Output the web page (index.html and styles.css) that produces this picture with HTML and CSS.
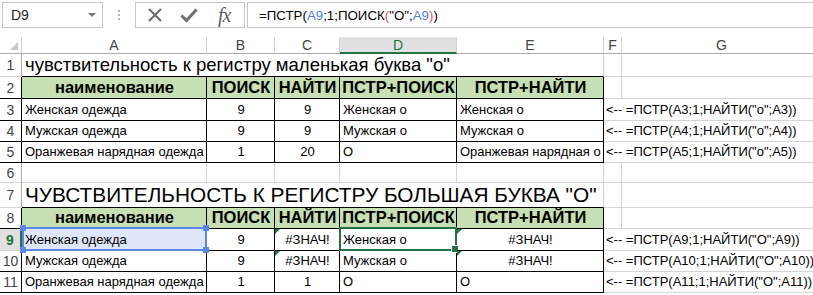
FILE: index.html
```html
<!DOCTYPE html>
<html lang="ru">
<head>
    <meta charset="UTF-8">
    <title>ПСТР и ПОИСК</title>
    <link rel="stylesheet" href="styles.css">
</head>
<body>
    <div class="toolbar">
        <div class="namebox"><span>D9</span><span class="caret"></span></div>
        <div class="grip"><i></i><i></i><i></i></div>
        <div class="buttons">
            <svg width="16" height="16" viewBox="0 0 16 16"><path d="M2 2 L14 14 M14 2 L2 14" stroke="#707070" stroke-width="2.2" fill="none"/></svg>
            <svg width="18" height="16" viewBox="0 0 18 16"><path d="M1.5 8.5 L6.5 13.5 L16.5 2.5" stroke="#707070" stroke-width="3" fill="none"/></svg>
            <span class="fx">fx</span>
        </div>
        <div class="formula">=ПСТР(<span class="ref">A9</span>;1;ПОИСК<span class="par">(</span>"О";<span class="ref">A9</span><span class="par">)</span>)</div>
    </div>

    <div class="sheet">
        <!-- column headers -->
        <div class="corner"><span></span></div>
        <div class="ch">A</div>
        <div class="ch">B</div>
        <div class="ch">C</div>
        <div class="ch on">D</div>
        <div class="ch">E</div>
        <div class="ch">F</div>
        <div class="ch">G</div>

        <!-- 1 -->
        <div class="rh">1</div>
        <div class="c t t1">чувствительность к регистру маленькая буква "о"</div>
        <div class="c"></div>
        <div class="c"></div>

        <!-- 2 -->
        <div class="rh k">2</div>
        <div class="c h">наименование</div>
        <div class="c h">ПОИСК</div>
        <div class="c h">НАЙТИ</div>
        <div class="c h">ПСТР+ПОИСК</div>
        <div class="c h">ПСТР+НАЙТИ</div>
        <div class="c"></div>
        <div class="c"></div>

        <!-- 3 -->
        <div class="rh k">3</div>
        <div class="c k">Женская одежда</div>
        <div class="c k n">9</div>
        <div class="c k n">9</div>
        <div class="c k">Женская о</div>
        <div class="c k">Женская о</div>
        <div class="c note">&lt;-- =ПСТР(A3;1;НАЙТИ("о";A3))</div>

        <!-- 4 -->
        <div class="rh k">4</div>
        <div class="c k">Мужская одежда</div>
        <div class="c k n">9</div>
        <div class="c k n">9</div>
        <div class="c k">Мужская о</div>
        <div class="c k">Мужская о</div>
        <div class="c note">&lt;-- =ПСТР(A4;1;НАЙТИ("о";A4))</div>

        <!-- 5 -->
        <div class="rh k">5</div>
        <div class="c k">Оранжевая нарядная одежда</div>
        <div class="c k n">1</div>
        <div class="c k n">20</div>
        <div class="c k">О</div>
        <div class="c k">Оранжевая нарядная о</div>
        <div class="c note">&lt;-- =ПСТР(A5;1;НАЙТИ("о";A5))</div>

        <!-- 6 -->
        <div class="rh">6</div>
        <div class="c"></div>
        <div class="c"></div>
        <div class="c"></div>
        <div class="c"></div>
        <div class="c"></div>
        <div class="c"></div>
        <div class="c"></div>

        <!-- 7 -->
        <div class="rh">7</div>
        <div class="c t t2">ЧУВСТВИТЕЛЬНОСТЬ К РЕГИСТРУ БОЛЬШАЯ БУКВА "О"</div>
        <div class="c"></div>
        <div class="c"></div>

        <!-- 8 -->
        <div class="rh k">8</div>
        <div class="c h">наименование</div>
        <div class="c h">ПОИСК</div>
        <div class="c h">НАЙТИ</div>
        <div class="c h">ПСТР+ПОИСК</div>
        <div class="c h">ПСТР+НАЙТИ</div>
        <div class="c"></div>
        <div class="c"></div>

        <!-- 9 -->
        <div class="rh on">9</div>
        <div class="c k picked">Женская одежда<span class="ref-box"><i class="tl"></i><i class="tr"></i><i class="bl"></i><i class="br"></i></span></div>
        <div class="c k n">9</div>
        <div class="c k n err">#ЗНАЧ!</div>
        <div class="c k active">Женская о<span class="cursor"></span></div>
        <div class="c k n err">#ЗНАЧ!</div>
        <div class="c note">&lt;-- =ПСТР(A9;1;НАЙТИ("О";A9))</div>

        <!-- 10 -->
        <div class="rh k">10</div>
        <div class="c k">Мужская одежда</div>
        <div class="c k n">9</div>
        <div class="c k n err">#ЗНАЧ!</div>
        <div class="c k">Мужская о</div>
        <div class="c k n err">#ЗНАЧ!</div>
        <div class="c note">&lt;-- =ПСТР(A10;1;НАЙТИ("О";A10))</div>

        <!-- 11 -->
        <div class="rh k">11</div>
        <div class="c k">Оранжевая нарядная одежда</div>
        <div class="c k n">1</div>
        <div class="c k n">1</div>
        <div class="c k">О</div>
        <div class="c k">О</div>
        <div class="c note">&lt;-- =ПСТР(A11;1;НАЙТИ("О";A11))</div>
    </div>
</body>
</html>
```

FILE: styles.css
```css
* {
    margin: 0;
    padding: 0;
    box-sizing: border-box;
}

body {
    font-family: "Liberation Sans", Arial, sans-serif;
    background: #fff;
    color: #000;
    width: 813px;
    height: 295px;
    overflow: hidden;
}

/* formula bar */
.toolbar {
    display: flex;
    height: 26px;
    margin-top: 2px;
    padding-left: 2px;
}

.namebox {
    width: 101px;
    border: 1px solid #c6c6c6;
    display: flex;
    align-items: center;
    justify-content: space-between;
    padding: 0 6px 0 8px;
    font-size: 14px;
    color: #222;
}

.caret {
    border-left: 4px solid transparent;
    border-right: 4px solid transparent;
    border-top: 4px solid #777;
}

.grip {
    width: 32px;
    display: flex;
    flex-direction: column;
    align-items: center;
    justify-content: center;
    gap: 2px;
}

.grip i {
    width: 2px;
    height: 2px;
    background: #b5b5b5;
}

.buttons {
    width: 110px;
    border: 1px solid #c6c6c6;
    display: flex;
    align-items: center;
    gap: 17px;
    padding-left: 11px;
}

.fx {
    font-family: "Liberation Serif", "Times New Roman", serif;
    font-style: italic;
    font-size: 20px;
    color: #606060;
    margin-left: 3px;
    letter-spacing: -1px;
}

.formula {
    flex: 1;
    margin-left: 2px;
    border: 1px solid #c6c6c6;
    border-right: none;
    padding-left: 11px;
    font-size: 13.3px;
    display: flex;
    align-items: center;
}

.ref {
    color: #4f7fdf;
}

.par {
    color: #e0506a;
}

/* sheet grid */
.sheet {
    display: grid;
    grid-template-columns: 22px 185px 68px 65px 117px 147px 18px 200px;
    grid-template-rows: 17px 23px 22px 22px 21px 21px 20px 25px 21px 22px 21px 21px;
    width: 843px;
    margin-top: 9px;
}

.corner {
    border-right: 1px solid #d4d4d4;
    border-bottom: 1px solid #ababab;
    position: relative;
}

.corner span {
    position: absolute;
    right: 3px;
    bottom: 3px;
    border-left: 8px solid transparent;
    border-bottom: 8px solid #c8c8c8;
}

.ch {
    border-right: 1px solid #d4d4d4;
    border-bottom: 1px solid #ababab;
    color: #444;
    font-size: 14px;
    display: flex;
    align-items: center;
    justify-content: center;
}

.ch.on {
    background: #e1e1e1;
    color: #217346;
    border-bottom: 2px solid #217346;
}

.rh {
    border-right: 1px solid #ababab;
    border-bottom: 1px solid #d4d4d4;
    color: #444;
    font-size: 14px;
    display: flex;
    align-items: center;
    justify-content: center;
}

.rh.k {
    border-right-color: #000;
}

.rh.on {
    background: #e1e1e1;
    color: #217346;
    font-weight: bold;
    border-right: 2px solid #217346;
}

.c {
    border-right: 1px solid #d4d4d4;
    border-bottom: 1px solid #d4d4d4;
    font-size: 13px;
    line-height: 16px;
    display: flex;
    align-items: flex-end;
    padding: 0 2px 2px 3px;
    white-space: nowrap;
}

.k {
    border-right-color: #000;
    border-bottom-color: #000;
}

.n {
    justify-content: center;
}

.t {
    grid-column: 2 / 7;
    border-bottom-color: #000;
    padding-bottom: 1px;
}

.t1 {
    font-size: 18.5px;
    line-height: 20px;
}

.t2 {
    font-size: 20.8px;
    line-height: 22px;
}

.h {
    background: #c6e0b4;
    font-weight: bold;
    font-size: 16.5px;
    line-height: 18px;
    justify-content: center;
    border-right-color: #000;
    border-bottom-color: #000;
}

.note {
    grid-column: 7 / 9;
    padding-left: 2px;
}

/* green error marker */
.err {
    position: relative;
}

.err::before {
    content: "";
    position: absolute;
    top: 0;
    left: 0;
    border-top: 5px solid #1e7b3f;
    border-right: 5px solid transparent;
}

/* reference highlight on A9 */
.picked {
    position: relative;
    background: #dfe6f7;
}

.ref-box {
    position: absolute;
    top: -2px;
    left: 0;
    right: -1px;
    bottom: -1px;
    border: 2px solid #5b87e6;
}

.ref-box i {
    position: absolute;
    width: 6px;
    height: 6px;
    background: #5b87e6;
}

.ref-box .tl { left: -4px; top: -4px; }
.ref-box .tr { right: -4px; top: -4px; }
.ref-box .bl { left: -4px; bottom: -4px; }
.ref-box .br { right: -4px; bottom: -4px; }

/* active cell D9 */
.active {
    position: relative;
}

.cursor {
    position: absolute;
    top: -2px;
    left: -1px;
    right: -1px;
    bottom: -1px;
    border: 2px solid #217346;
}

.cursor::after {
    content: "";
    position: absolute;
    right: -4px;
    bottom: -4px;
    width: 6px;
    height: 6px;
    background: #217346;
    border: 1px solid #fff;
}
```
